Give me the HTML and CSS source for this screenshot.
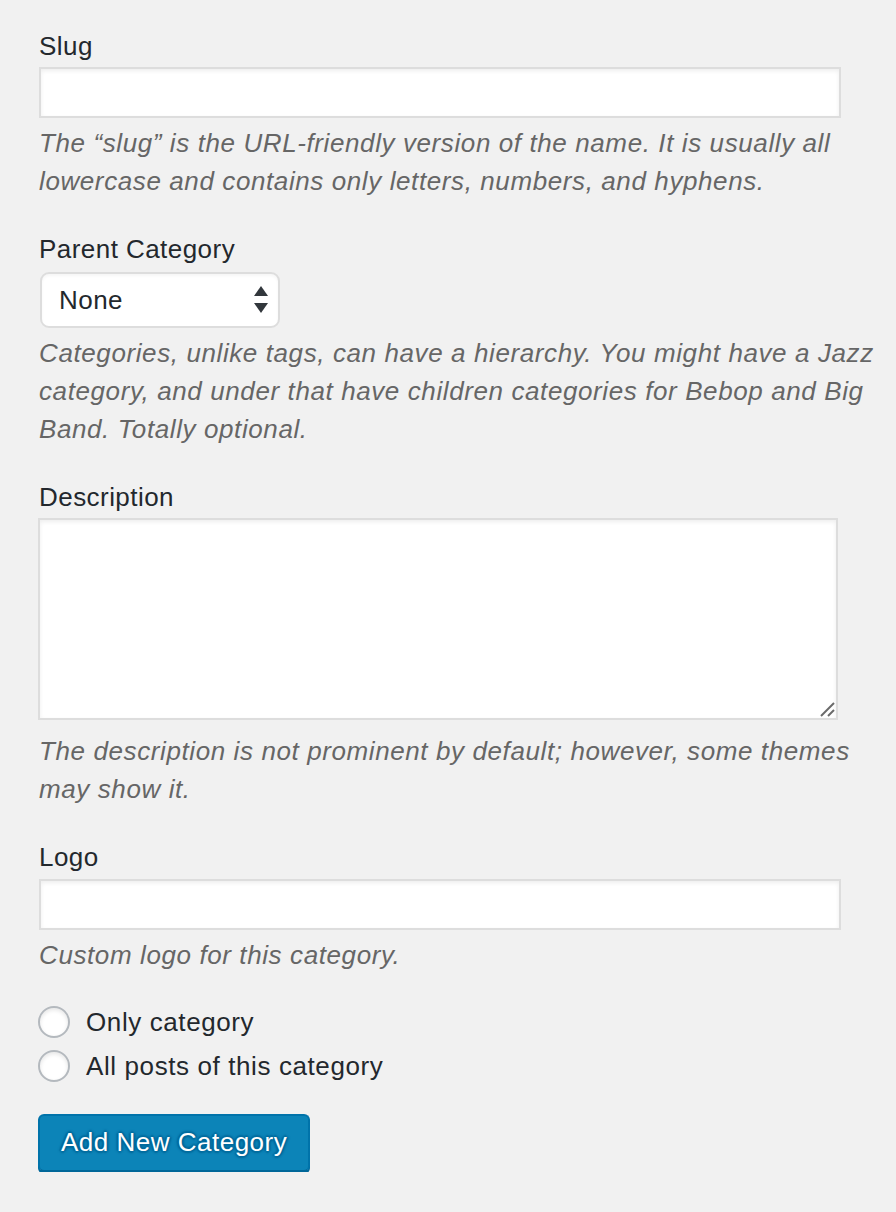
FILE: index.html
```html
<!DOCTYPE html>
<html lang="en">
<head>
<meta charset="utf-8">
<title>Add New Category</title>
<link rel="stylesheet" href="styles.css">
</head>
<body>
<form class="wrap">
  <div class="field">
    <label class="label" for="slug">Slug</label>
    <input class="text-input" id="slug" type="text">
    <p class="desc">The “slug” is the URL-friendly version of the name. It is usually all lowercase and contains only letters, numbers, and hyphens.</p>
  </div>

  <div class="field">
    <label class="label" for="parent">Parent Category</label>
    <div class="select" id="parent">
      <span class="select-value">None</span>
      <svg class="select-arrows" width="14" height="28" viewBox="0 0 14 28">
        <path d="M7 0 L14 10 L0 10 Z" fill="#32373c"/>
        <path d="M0 17 L14 17 L7 27 Z" fill="#32373c"/>
      </svg>
    </div>
    <p class="desc">Categories, unlike tags, can have a hierarchy. You might have a Jazz category, and under that have children categories for Bebop and Big Band. Totally optional.</p>
  </div>

  <div class="field">
    <label class="label" for="description">Description</label>
    <div class="textarea" id="description">
      <svg class="grip" width="16" height="16" viewBox="0 0 16 16">
        <path d="M2 15 L15 2" stroke="#6a6a6a" stroke-width="2"/>
        <path d="M9 15 L15 9" stroke="#6a6a6a" stroke-width="2"/>
      </svg>
    </div>
    <p class="desc desc-wide">The description is not prominent by default; however, some themes may show it.</p>
  </div>

  <div class="field">
    <label class="label" for="logo">Logo</label>
    <input class="text-input logo-input" id="logo" type="text">
    <p class="desc">Custom logo for this category.</p>
  </div>

  <div class="radios">
    <label class="radio-row"><span class="radio"></span>Only category</label>
    <label class="radio-row"><span class="radio"></span>All posts of this category</label>
  </div>

  <button class="button-primary" type="button">Add New Category</button>
</form>
</body>
</html>
```

FILE: styles.css
```css
html, body {
  margin: 0;
  padding: 0;
  background: #f1f1f1;
}

body {
  font-family: "Liberation Sans", Arial, sans-serif;
  color: #23282d;
}

.wrap {
  width: 842px;
  padding: 28px 0 0 38px;
  margin: 0;
}

.field {
  display: flex;
  flex-direction: column;
  align-items: flex-start;
  margin-bottom: 31px;
}

.label {
  display: block;
  font-size: 26px;
  line-height: 36px;
  letter-spacing: 0.45px;
  margin: 0 0 3px 1px;
  color: #23282d;
}

.text-input {
  box-sizing: border-box;
  width: 802px;
  height: 51px;
  margin: 0 0 0 1px;
  padding: 0 10px;
  border: 2px solid #dddddd;
  background: #ffffff;
  box-shadow: inset 0 2px 4px rgba(0, 0, 0, 0.07);
  font-size: 26px;
  outline: none;
}

.logo-input {
  margin-top: 1px;
}

.desc {
  margin: 6px 0 0 1px;
  font-size: 26px;
  line-height: 38px;
  letter-spacing: 0.6px;
  font-style: italic;
  color: #666666;
}

.select {
  box-sizing: border-box;
  width: 240px;
  height: 56px;
  margin: 2px 0 0 2px;
  padding: 0 10px 0 17px;
  display: flex;
  align-items: center;
  justify-content: space-between;
  background: #ffffff;
  border: 2px solid #dddddd;
  border-radius: 9px;
  box-shadow: inset 0 2px 3px rgba(0, 0, 0, 0.04);
}

.select-value {
  font-size: 26px;
  letter-spacing: 0.45px;
  color: #23282d;
}

.select-arrows {
  display: block;
}

.textarea {
  position: relative;
  box-sizing: border-box;
  width: 800px;
  height: 202px;
  margin: 0;
  border: 2px solid #dddddd;
  background: #ffffff;
  box-shadow: inset 0 2px 4px rgba(0, 0, 0, 0.07);
}

.grip {
  position: absolute;
  right: 1px;
  bottom: 1px;
}

.desc-wide {
  margin-top: 12px;
}

.radios {
  display: flex;
  flex-direction: column;
  margin-top: -5px;
}

.radio-row {
  display: flex;
  align-items: center;
  height: 44px;
  font-size: 26px;
  letter-spacing: 0.6px;
  color: #23282d;
}

.radio {
  box-sizing: border-box;
  width: 32px;
  height: 32px;
  margin-right: 16px;
  border: 2px solid #b4b9be;
  border-radius: 50%;
  background: #ffffff;
  box-shadow: inset 0 2px 4px rgba(0, 0, 0, 0.1);
}

.button-primary {
  display: block;
  box-sizing: border-box;
  margin-top: 26px;
  height: 58px;
  padding: 0 21px 2px;
  font-family: "Liberation Sans", Arial, sans-serif;
  font-size: 26px;
  letter-spacing: 0.5px;
  color: #ffffff;
  background: #0c84b8;
  border: 2px solid #0073aa;
  border-bottom-color: #006799;
  border-radius: 6px;
  box-shadow: 0 2px 0 #006799;
  text-shadow: 0 -2px 2px #006799, 2px 0 2px #006799, 0 2px 2px #006799, -2px 0 2px #006799;
}
```
